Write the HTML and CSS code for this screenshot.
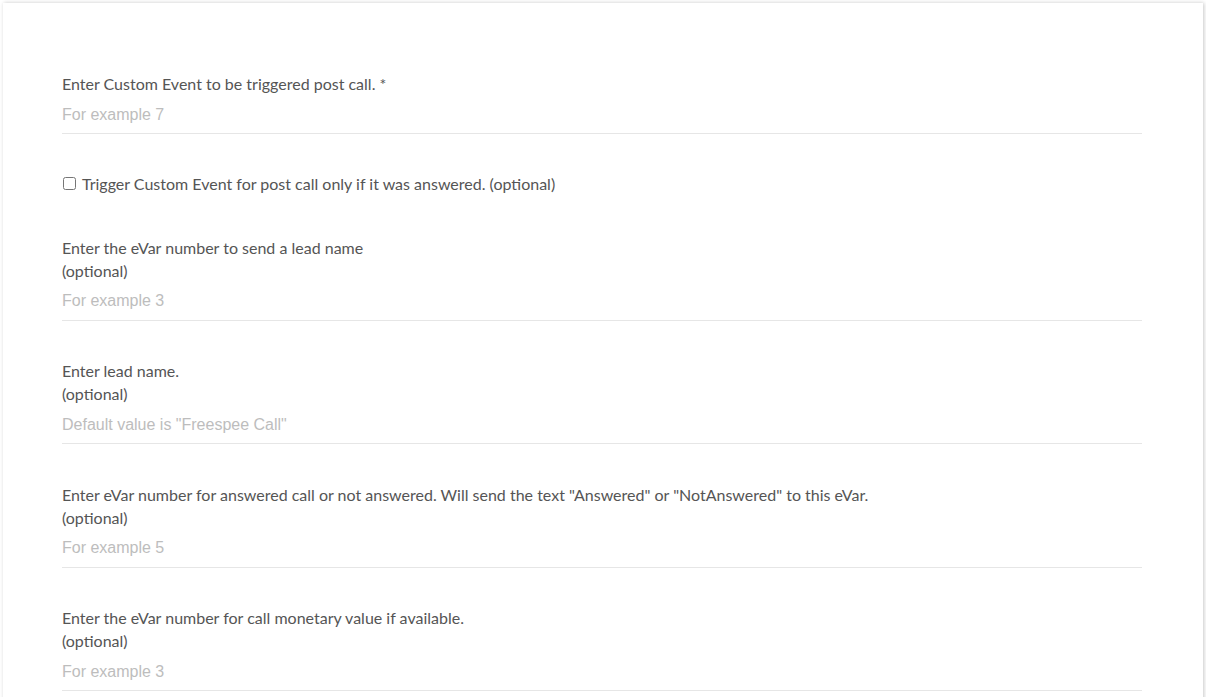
FILE: index.html
```html
<!DOCTYPE html>
<html>
  <head>
    <title>Custom Event settings</title>
    <link rel="stylesheet" href="styles.css">
  </head>
  <body>
    <div class="card">
      <div class="field">
        <label for="event">Enter Custom Event to be triggered post call. *</label>
        <input type="text" id="event" placeholder="For example 7">
      </div>

      <div class="check-row">
        <input type="checkbox" id="answered-only">
        <label for="answered-only">Trigger Custom Event for post call only if it was answered. (optional)</label>
      </div>

      <div class="field">
        <label for="lead-evar">Enter the eVar number to send a lead name<br>(optional)</label>
        <input type="text" id="lead-evar" placeholder="For example 3">
      </div>

      <div class="field">
        <label for="lead-name">Enter lead name.<br>(optional)</label>
        <input type="text" id="lead-name" placeholder="Default value is &quot;Freespee Call&quot;">
      </div>

      <div class="field">
        <label for="answered-evar">Enter eVar number for answered call or not answered. Will send the text "Answered" or "NotAnswered" to this eVar.<br>(optional)</label>
        <input type="text" id="answered-evar" placeholder="For example 5">
      </div>

      <div class="field">
        <label for="value-evar">Enter the eVar number for call monetary value if available.<br>(optional)</label>
        <input type="text" id="value-evar" placeholder="For example 3">
      </div>
    </div>
  </body>
</html>
```

FILE: styles.css
```css
  body {
    margin: 0;
    background-color: #fff;
    font-family: Lato, "Liberation Sans", sans-serif;
  }
  /* white sheet holding the form */
  .card {
    margin: 3px 3px 0 3px;
    padding: 69px 61px 40px 59px;
    background-color: #fff;
    box-shadow: 1px 0 4px rgba(0, 0, 0, 0.22);
  }
  .field {
    margin-bottom: 38.5px;
  }
  .field label {
    display: block;
    font-size: 16px;
    line-height: 23px;
    color: #555;
  }
  .field input {
    display: block;
    width: 100%;
    box-sizing: border-box;
    height: 38px;
    margin-top: 1px;
    padding: 0;
    border: none;
    border-bottom: 1px solid #e6e6e6;
    outline: none;
    font-family: "Liberation Sans", Arial, sans-serif;
    font-size: 16px;
    color: #555;
  }
  .field input::placeholder {
    color: #bdbdbd;
  }
  .check-row {
    display: flex;
    align-items: center;
    height: 22px;
    margin-bottom: 41px;
    font-size: 16px;
    color: #555;
  }
  .check-row input {
    width: 13px;
    height: 13px;
    margin: 0 6px 0 1px;
  }
```
